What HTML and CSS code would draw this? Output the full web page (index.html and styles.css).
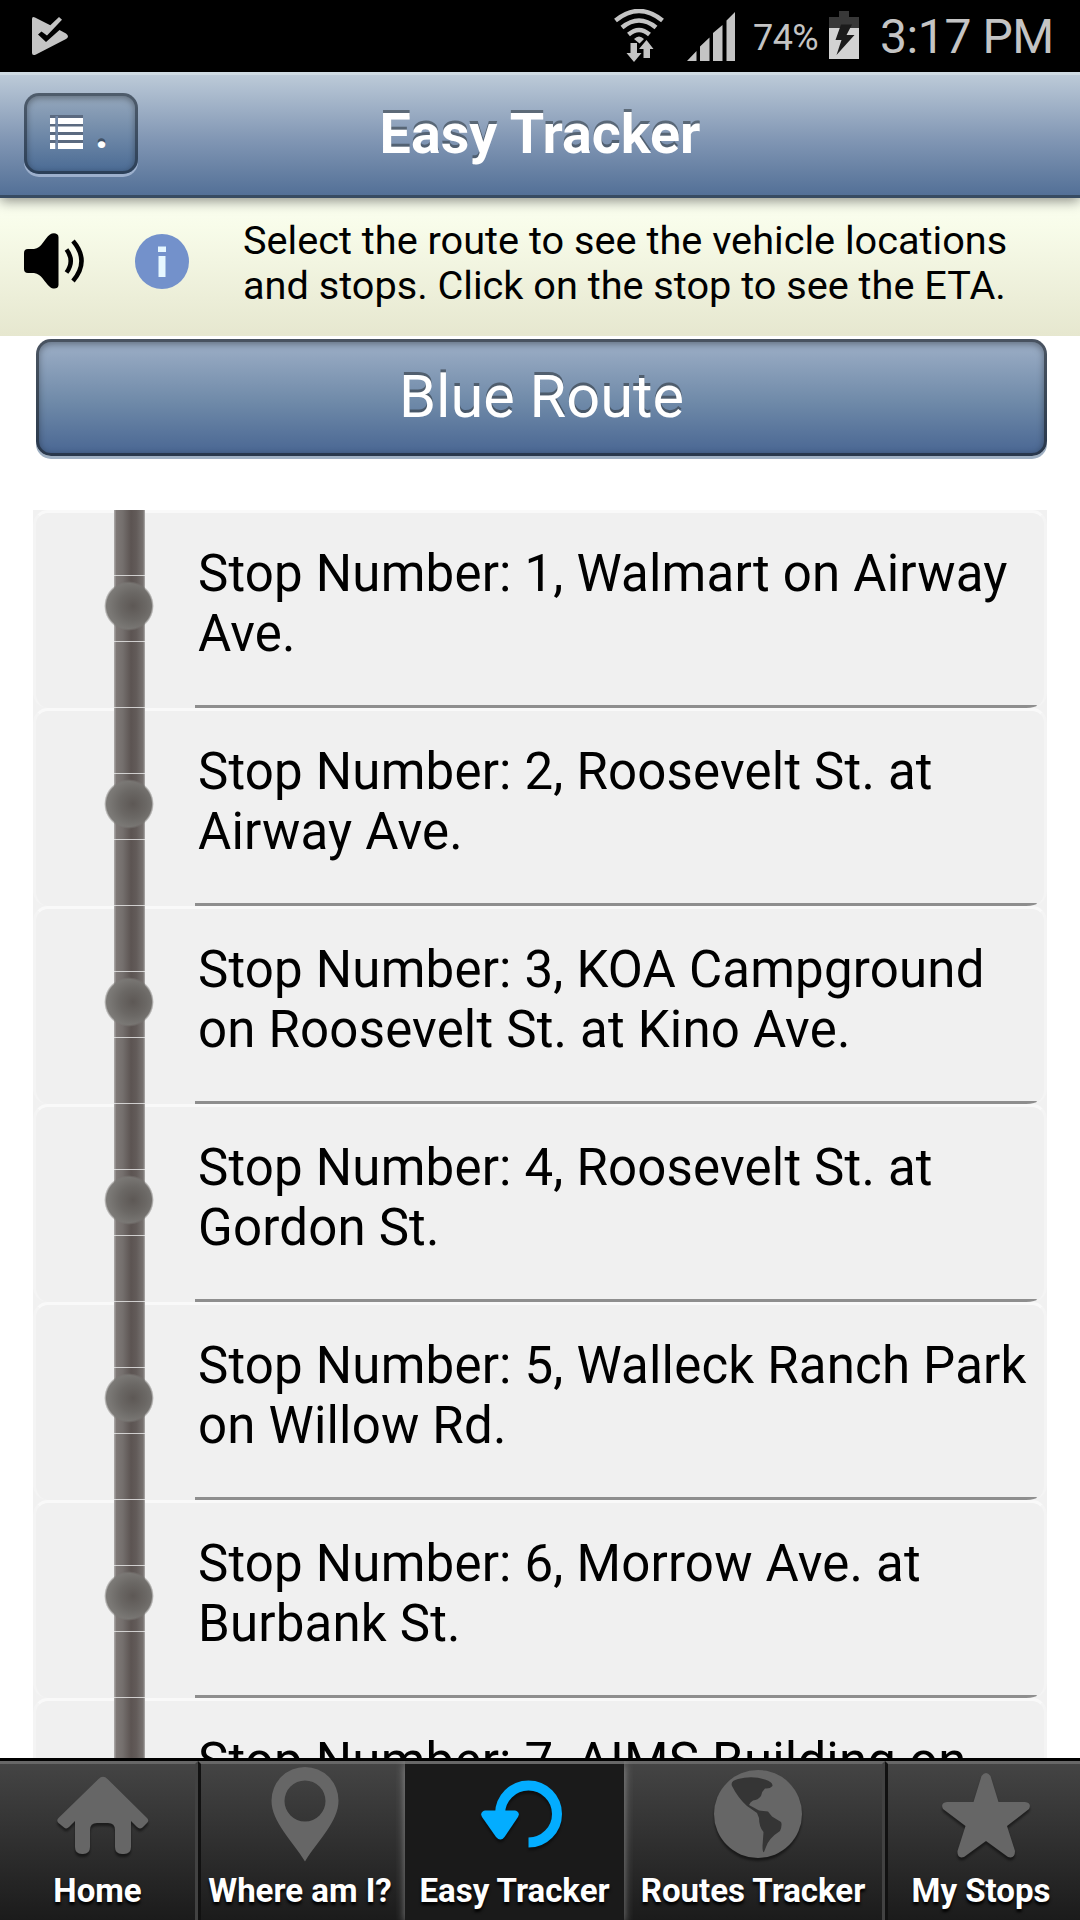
FILE: index.html
```html
<!DOCTYPE html>
<html lang="en">
<head>
<meta charset="utf-8">
<title>Easy Tracker</title>
<link rel="stylesheet" href="styles.css">
</head>
<body>
<div class="screen">
  <div class="status">
    <svg class="status-play" width="36" height="38" viewBox="0 0 36 38">
      <path fill="#c4c4c4" d="M0 2Q0-.8 3 .5L18.300 8.300 27 0 30 2.800 15 18.500 9.500 14.500 6 17.500 14 25 27.500 13 34 16.500Q38 19.500 34 22L4 37.500Q0 39 0 36Z"/>
    </svg>
    <div class="status-right">
      <svg class="status-wifi" width="50" height="54" viewBox="0 0 50 54">
        <g fill="none" stroke="#c4c4c4" stroke-width="4.500">
          <path d="M1.500 11.500Q25-7.500 48.500 11.500"/><path d="M8 18.500Q25 4.500 42 18.500"/><path d="M14.500 25.500Q25 16.500 35.500 25.500"/>
        </g>
        <path fill="#c4c4c4" d="M20 30Q25 25 30 30L25.500 34.500ZM16.500 34H23V44H27.500L20 53 12.500 44H16.500ZM32.500 31L39.500 40H36V49H29.500V40H25Z"/>
      </svg>
      <svg class="status-signal" width="48" height="49" viewBox="0 0 48 49">
        <path fill="#c4c4c4" d="M0 49L9.500 39V49ZM13 49V34.500L22.500 25.500V49ZM26 49V21L35.500 13V49ZM39.500 49V8.500L48 0V49Z"/>
      </svg>
      <span class="status-percent">74%</span>
      <svg class="status-battery" width="30" height="48" viewBox="0 0 30 48">
        <path fill="#383838" d="M10 0H20V6H30V17H0V6H10Z"/><path fill="#d2d2d2" d="M0 17H30V48H0Z"/>
        <path fill="#1b1b1b" d="M12 13.500H23L17.500 24H25.500L7.500 44 12.500 29H6.500Z"/>
      </svg>
      <span class="status-clock">3:17 PM</span>
    </div>
  </div>

  <header class="header">
    <button class="menu">
      <svg width="33" height="34" viewBox="0 0 33 34">
        <g fill="#5b6a80"><path d="M0 0H33V6H0ZM0 8H33V14H0ZM0 16H33V22H0ZM0 25H33V30H0Z"/></g>
        <g fill="#fff"><path d="M0 3H5.500V9H0ZM8 3H33V9H8ZM0 11.500H5.500V17H0ZM8 11.500H33V17H8ZM0 20H5.500V25H0ZM8 20H33V25H8ZM0 28H5.500V34H0ZM8 28H33V34H8Z"/></g>
        <path fill="#7186a5" d="M5.500 1H8V34H5.500Z"/>
      </svg>
      <span class="menu-dot">.</span>
    </button>
    <h1 class="title">Easy Tracker</h1>
  </header>

  <section class="info">
    <svg class="info-speaker" width="60" height="56" viewBox="0 0 60 56">
      <path d="M0 20Q0 16 4 16H10C18 15 20 6 26 1.500 29-.5 34.500 0 34.500 4V52C34.500 56 29 56.500 26 54 20 49 18 41 10 40H4Q0 40 0 36Z"/>
      <path d="M42.500 16.500Q51 28 42.500 39.500M49 8Q66 28 49 48" fill="none" stroke="#000" stroke-width="4.500"/>
    </svg>
    <svg class="info-mark" width="54" height="55" viewBox="0 0 54 55">
      <ellipse cx="27" cy="27.500" rx="27" ry="27.500" fill="#7391cb"/>
      <path fill="#e6f7ff" d="M23 12.500H31V18H23ZM23.500 22H30.500V43H23.500Z"/>
    </svg>
    <p class="info-text">Select the route to see the vehicle locations<br>and stops. Click on the stop to see the ETA.</p>
  </section>

  <main class="main">
    <button class="route">Blue Route</button>
    <ul class="stops">
      <li class="stop"><div class="track"><i class="dot"></i></div><p class="stop-text">Stop Number: 1, Walmart on Airway<br>Ave.</p></li>
      <li class="stop"><div class="track"><i class="dot"></i></div><p class="stop-text">Stop Number: 2, Roosevelt St. at<br>Airway Ave.</p></li>
      <li class="stop"><div class="track"><i class="dot"></i></div><p class="stop-text">Stop Number: 3, KOA Campground<br>on Roosevelt St. at Kino Ave.</p></li>
      <li class="stop"><div class="track"><i class="dot"></i></div><p class="stop-text">Stop Number: 4, Roosevelt St. at<br>Gordon St.</p></li>
      <li class="stop"><div class="track"><i class="dot"></i></div><p class="stop-text">Stop Number: 5, Walleck Ranch Park<br>on Willow Rd.</p></li>
      <li class="stop"><div class="track"><i class="dot"></i></div><p class="stop-text">Stop Number: 6, Morrow Ave. at<br>Burbank St.</p></li>
      <li class="stop"><div class="track"><i class="dot"></i></div><p class="stop-text">Stop Number: 7, AIMS Building on</p></li>
    </ul>
  </main>

  <nav class="tabs">
    <a class="tab tab-home">
      <svg class="tab-icon" width="92" height="98" viewBox="0 0 92 98">
        <path d="M41.500 12Q46 7.500 50.500 12L90 51Q92.500 53.500 90 56L85.500 60.500Q82.500 62.500 80 60L74 54V80Q74 87 67 87H65Q58 87 58 80V63Q58 56 51 56H40Q33 56 33 63V80Q33 87 26 87H25Q18 87 18 80V54L12 60Q9.500 62.500 7 60.500L1.500 56Q-1 53.500 1.500 51Z"/>
      </svg>
      <span class="tab-label">Home</span>
    </a>
    <a class="tab tab-where">
      <svg class="tab-icon plain" width="68" height="98" viewBox="0 0 68 98">
        <path fill-rule="evenodd" d="M34 0A33.500 33.500 0 0 1 67.500 33.500C67.500 55 47 73 34 94.500 21 73 .5 55 .5 33.500A33.500 33.500 0 0 1 34 0ZM34 13.500A20.500 20.500 0 1 0 34 54.500 20.500 20.500 0 1 0 34 13.500Z"/>
      </svg>
      <span class="tab-label">Where am I?</span>
    </a>
    <a class="tab tab-easy active">
      <svg class="tab-icon" width="82" height="98" viewBox="0 0 82 98">
        <path fill="none" stroke="#03adff" stroke-width="10" d="M19 47A28.500 28.500 0 1 1 47.500 75.500"/>
        <path d="M4 43.500H34Q39.500 45 37 50L23.500 70Q19.500 75 15 70L1 50Q-1.500 45 4 43.500Z"/>
      </svg>
      <span class="tab-label">Easy Tracker</span>
    </a>
    <a class="tab tab-routes">
      <svg class="tab-icon" width="88" height="98" viewBox="0 0 88 98">
        <circle cx="44" cy="47" r="44"/>
        <path class="land" d="M18 19Q16 14 24 12 38 8.500 51 12.500 59 15 58.500 19 56 22 51 21.500 48 24 47 29 44 33 39 33.500 36 35 35 38L45 43.500 54 44.500 58 49.500 67 55Q68.500 58 66 64 55 71 52 80L50 85Q48.500 86 48.500 79L49.500 65Q45 60 45 51L43 46 33 39Q24 31 18 19Z"/>
      </svg>
      <span class="tab-label">Routes Tracker</span>
    </a>
    <a class="tab tab-my">
      <svg class="tab-icon" width="88" height="98" viewBox="0 0 88 98">
        <path d="M39.500 9Q44 3 48.500 9L56.500 35H83Q90 36 87 42L65 59 73 84Q73 92 66 90L44 74 22 90Q15 92 15.500 84L23.500 59 1 42Q-2 36 5 35H31.500Z"/>
      </svg>
      <span class="tab-label">My Stops</span>
    </a>
  </nav>
</div>
</body>
</html>
```
FILE: styles.css
```css
* { box-sizing: border-box; }
body { margin: 0; font-family: Roboto, "Liberation Sans", sans-serif; color: #000; background: #fff; }
h1, p, ul { margin: 0; padding: 0; }
button { font-family: inherit; }
svg { display: block; flex: none; }

.screen { display: flex; flex-direction: column; width: 1080px; height: 1920px; overflow: hidden; }

.status { display: flex; flex: none; height: 72px; background: #000; color: #c4c4c4; padding: 0 28px 0 32px; white-space: nowrap; }
.status-play { margin-top: 17px; }
.status-right { display: flex; margin-left: auto; }
.status-wifi { margin-top: 9px; }
.status-signal { margin: 12px 0 0 23px; }
.status-percent { width: 94px; padding-left: 18px; font-size: 36px; line-height: 76px; letter-spacing: -.6px; }
.status-battery { margin-top: 11px; }
.status-clock { width: 193px; padding-left: 21px; font-size: 48px; line-height: 74px; letter-spacing: -.4px; }

.header { position: relative; z-index: 1; display: grid; grid-template-columns: 138px 1fr 138px; flex: none; height: 126px; border-top: 3px solid #cfdbe3; border-bottom: 3px solid #374b62; background: linear-gradient(#bccad8, #8398b5 52%, #537097); box-shadow: 0 3px 12px rgba(0, 0, 0, .45); }
.menu { display: flex; align-items: flex-start; width: 114px; height: 81px; margin: 18px 0 0 24px; padding: 19px 0 0 23px; border: 3px solid rgba(20, 30, 40, .55); border-radius: 15px; background: linear-gradient(#98aabe, #486993) border-box; box-shadow: 0 3px 0 #9db0cd, inset 0 2px 6px rgba(0, 0, 0, .35); color: #fff; }
.menu-dot { margin-left: 12px; font-size: 46px; line-height: 34px; font-weight: 700; text-shadow: 0 -3px 0 rgba(0, 0, 0, .4); }
.title { text-align: center; color: #fff; font-size: 55.700px; line-height: 118px; font-weight: 700; text-shadow: 0 -3px 0 rgba(60, 70, 80, .65); }

.info { display: flex; flex: none; height: 138px; padding: 0 0 0 24px; background: linear-gradient(#fbfff0, #f8fcea 20%, #e6e7cf); }
.info-speaker { margin-top: 35px; }
.info-mark { margin: 36px 0 0 51px; }
.info-text { margin: 20px 0 0 54px; font-size: 39.680px; line-height: 45px; white-space: nowrap; }

.main { flex: 1; min-height: 0; overflow: hidden; padding: 3px 33px 0; }
.route { display: block; width: 1011px; height: 117px; margin: 0 0 0 3px; padding: 0; border: 3px solid rgba(20, 25, 30, .6); border-radius: 15px; background: linear-gradient(#96a9c2 10%, #6e89a8 55%, #486592) border-box; box-shadow: 0 3px 0 #9fb0c3, inset 0 2px 7px rgba(0, 0, 0, .35); color: #fff; font-size: 59.500px; line-height: 111px; text-shadow: 0 -3px 0 rgba(60, 70, 80, .7); }

.stops { margin-top: 54px; background: #f1f1f1; list-style: none; }
.stop { display: flex; height: 198px; padding-left: 81px; border: solid #f4f4f4; border-width: 3px 3px 0; border-top-color: #f9f9f9; border-radius: 15px; background: #f0f0f0; }
.track { position: relative; z-index: 1; display: flex; flex: none; justify-content: center; align-items: center; width: 31px; height: 198px; margin: -3px 0 0 -3px; background: repeating-linear-gradient(transparent 0 65px, rgba(235, 235, 235, .8) 65px 66px), linear-gradient(90deg, #b0aead 0, #7e7876 8%, #746f6d 28%, #5c5452 55%, #625b59 72%, #777270 94%, #b0aead); }
.dot { flex: none; width: 50px; height: 50px; margin: -6px 1px 0 0; border-radius: 50%; background: radial-gradient(circle at 58% 50%, #5d5855, #6b6865 36%, #7b7976 64%, #807e7b); -webkit-mask: radial-gradient(closest-side, #000 90%, transparent 100%); mask: radial-gradient(closest-side, #000 90%, transparent 100%); }
.stop-text { flex: 1; margin: 0 7px 0 50px; padding: 31px 0 0 3px; font-size: 51px; line-height: 60px; letter-spacing: .190px; white-space: nowrap; border-bottom: 3px solid #8e8e8e; border-bottom-right-radius: 11px 3px; }

.tabs { display: flex; flex: none; height: 162px; border-top: 3px solid #000; background: linear-gradient(#454545, #1b1b1b); }
.tab { display: flex; flex: none; flex-direction: column; align-items: center; padding-top: 3px; border-top: 3px solid #676767; color: #fff; }
.tab-home { width: 198px; border-right: 3px solid #424242; }
.tab-where { width: 207px; padding-right: 6px; border-left: 3px solid #111; }
.tab-easy { width: 219px; }
.tab-routes { width: 261px; border-right: 3px solid #424242; }
.tab-my { width: 195px; padding-right: 6px; border-left: 3px solid #111; }
.active { background: #1a1a1a; box-shadow: 0 3px 9px rgba(255, 255, 255, .45); clip-path: inset(0 -9px); }
.tab-icon { position: relative; left: 5px; fill: #666; filter: drop-shadow(0 3px 1px rgba(0, 0, 0, .45)); }
.plain { filter: none; }
.active .tab-icon { left: 7px; fill: #03adff; }
.land { fill: #353535; }
.tab-label { margin-top: 5px; font-size: 33px; line-height: 42px; font-weight: 700; white-space: nowrap; text-shadow: 0 3px 3px #000; }
```
